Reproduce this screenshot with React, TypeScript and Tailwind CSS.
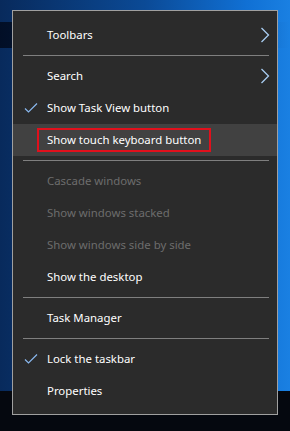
import React from "react";

const Check = () => (
  <svg width="14" height="10" viewBox="0 0 14 10" className="absolute left-[11px] top-[11px]">
    <polyline points="1,5.5 4.5,9 13,0.5" fill="none" stroke="#8ab8ee" strokeWidth="1.2" />
  </svg>
);

const Chevron = () => (
  <svg width="10" height="16" viewBox="0 0 10 16" className="absolute right-[7px] top-[8px]">
    <polyline points="1.5,1 8.5,8 1.5,15" fill="none" stroke="#a9cdf2" strokeWidth="1.3" />
  </svg>
);

type ItemProps = { label: string; disabled?: boolean; checked?: boolean; sub?: boolean };

const Item = ({ label, disabled, checked, sub }: ItemProps) => (
  <div className="relative h-[32px] flex items-center pl-[34px]">
    {checked && <Check />}
    <span className={disabled ? "text-[#6d6d6d]" : "text-white"}>{label}</span>
    {sub && <Chevron />}
  </div>
);

const Sep = () => <div className="my-[4px] ml-[10px] mr-[8px] h-px bg-[#7f7f7f]" />;

export default function App() {
  return (
    <div
      className="relative w-[290px] h-[431px] overflow-hidden flex flex-col"
      style={{ fontFamily: '"Noto Sans", "Open Sans", sans-serif' }}
    >
      <div className="h-[391px] bg-[linear-gradient(90deg,#082a5c_0%,#0b4a96_50%,#1070d4_85%,#1a80e2_100%)] relative">
        <div className="absolute left-0 right-0 top-[22px] h-[26px] bg-[linear-gradient(90deg,rgba(0,8,25,0.8),rgba(0,10,30,0.3)_60%,rgba(0,0,0,0))]" />
      </div>
      <div className="h-[40px] bg-[#05080f]" />
      <div className="absolute left-[12px] top-[10px] w-[266px] border border-[#a0a0a0] bg-[#2b2b2b] pt-[8px] pb-[7px] text-[11.4px] leading-none">
        <Item label="Toolbars" sub />
        <Sep />
        <Item label="Search" sub />
        <Item label="Show Task View button" checked />
        <div className="relative h-[32px] flex items-center pl-[34px] bg-[#414141]">
          <span className="ml-[-10px] h-[24px] px-[8px] border-2 border-[#e0101c] inline-flex items-center text-white">
            Show touch keyboard button
          </span>
        </div>
        <Sep />
        <Item label="Cascade windows" disabled />
        <Item label="Show windows stacked" disabled />
        <Item label="Show windows side by side" disabled />
        <Item label="Show the desktop" />
        <Sep />
        <Item label="Task Manager" />
        <Sep />
        <Item label="Lock the taskbar" checked />
        <Item label="Properties" />
      </div>
    </div>
  );
}
